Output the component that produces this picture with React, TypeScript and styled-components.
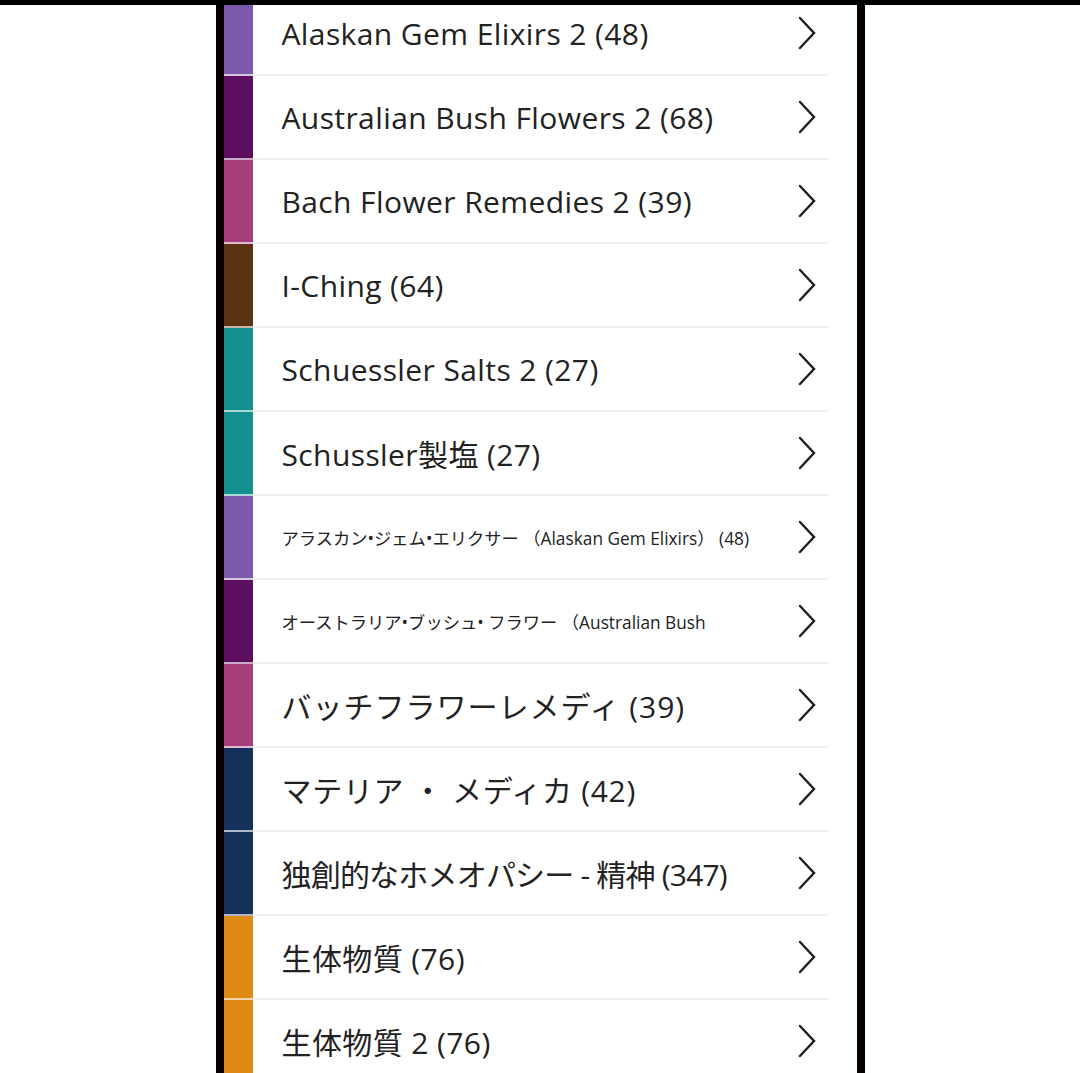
import React from 'react';
import styled, { createGlobalStyle } from 'styled-components';

const GlobalStyle = createGlobalStyle`
  html, body {
    margin: 0;
    padding: 0;
    background: #fff;
  }
  body {
    font-family: "Open Sans", "Noto Sans CJK JP", sans-serif;
    color: #222;
  }
`;

const Page = styled.div`
  display: flex;
  flex-direction: column;
  height: 100vh;
  overflow: hidden;
`;

const TopBar = styled.div`
  flex: 0 0 5px;
  background: #000;
  position: relative;
  z-index: 1;
`;

const Phone = styled.div`
  flex: 1;
  width: 649px;
  margin: 0 auto;
  box-sizing: border-box;
  border-left: 8px solid #060006;
  border-right: 8px solid #060006;
  overflow: hidden;
  background: #fff;
`;

const List = styled.ul`
  list-style: none;
  margin: -13px 0 0;
  padding: 0;
`;

const Row = styled.li`
  display: flex;
  height: 84px;
`;

const ColorBar = styled.div<{ $color: string }>`
  flex: 0 0 29px;
  background: ${(p) => p.$color};
  border-bottom: 2px solid rgba(255, 255, 255, 0.65);
`;

const Content = styled.div`
  flex: 1;
  display: flex;
  align-items: center;
  margin-right: 28px;
  padding: 0 13px 0 29px;
  border-bottom: 2px solid #f0f0f0;
  min-width: 0;
`;

const Label = styled.span<{ $small?: boolean; $spacing?: number }>`
  flex: 1;
  font-size: ${(p) => (p.$small ? '17.3px' : '30px')};
  letter-spacing: ${(p) => (p.$spacing ?? (p.$small ? 0 : 0.4))}px;
  white-space: nowrap;
  overflow: hidden;
  color: #222;
`;

const Chevron = () => (
  <svg width="18" height="34" viewBox="0 0 18 34" fill="none">
    <polyline
      points="2,2 16,17 2,32"
      stroke="#1e1e1e"
      strokeWidth="2.4"
      strokeLinecap="round"
      strokeLinejoin="miter"
    />
  </svg>
);

const PURPLE = '#7d5aae';
const PLUM = '#5c0f5f';
const MAGENTA = '#a63e79';
const BROWN = '#5c3312';
const TEAL = '#14908f';
const NAVY = '#15325c';
const ORANGE = '#e08a16';

type Item = { label: string; color: string; small?: boolean; spacing?: number };

const items: Item[] = [
  { label: 'Alaskan Gem Elixirs 2 (48)', color: PURPLE },
  { label: 'Australian Bush Flowers 2 (68)', color: PLUM },
  { label: 'Bach Flower Remedies 2 (39)', color: MAGENTA },
  { label: 'I-Ching (64)', color: BROWN },
  { label: 'Schuessler Salts 2 (27)', color: TEAL },
  { label: 'Schussler製塩 (27)', color: TEAL },
  { label: 'アラスカン•ジェム•エリクサー （Alaskan Gem Elixirs） (48)', color: PURPLE, small: true },
  { label: 'オーストラリア•ブッシュ• フラワー （Australian Bush', color: PLUM, small: true },
  { label: 'バッチフラワーレメディ (39)', color: MAGENTA, spacing: 1 },
  { label: 'マテリア ・ メディカ (42)', color: NAVY, spacing: 0.7 },
  { label: '独創的なホメオパシー - 精神 (347)', color: NAVY, spacing: -0.8 },
  { label: '生体物質 (76)', color: ORANGE },
  { label: '生体物質 2 (76)', color: ORANGE },
];

const App: React.FC = () => {
  return (
    <Page>
      <GlobalStyle />
      <TopBar />
      <Phone>
        <List>
          {items.map((item) => (
            <Row key={item.label}>
              <ColorBar $color={item.color} />
              <Content>
                <Label $small={item.small} $spacing={item.spacing}>
                  {item.label}
                </Label>
                <Chevron />
              </Content>
            </Row>
          ))}
        </List>
      </Phone>
    </Page>
  );
};

export default App;
